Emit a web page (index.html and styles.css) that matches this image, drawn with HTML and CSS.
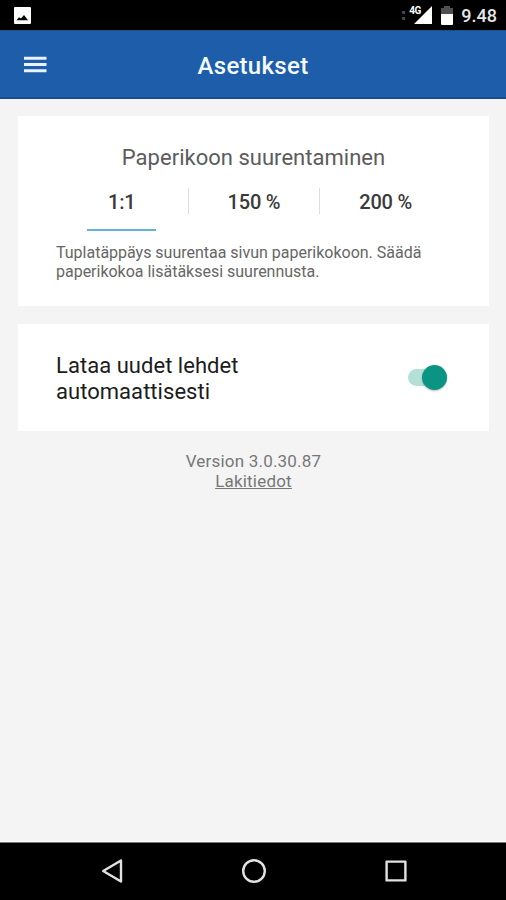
FILE: index.html
```html
<!DOCTYPE html>
<html lang="fi">
<head>
<meta charset="utf-8">
<title>Asetukset</title>
<link rel="stylesheet" href="styles.css">
</head>
<body>
<div class="screen">
  <div class="status">
    <svg class="status-image" width="17" height="17" viewBox="0 0 17 17"><path fill="#fff" d="M1 0h15q1 0 1 1v15q0 1-1 1H1q-1 0-1-1V1q0-1 1-1z"/><path d="M2.5 13.2 5 10.2 7 11.5 10 8 14 13.2z"/></svg>
    <div class="status-right">
      <svg width="4" height="9" viewBox="0 0 4 9" fill="#444"><path d="M0 0h3v3H0zM0 6h3v3H0z"/></svg>
      <div class="signal">
        <svg width="18" height="18" viewBox="0 0 18 18"><path fill="#fff" d="M18 0v18H0z"/></svg>
        <span class="network">4G</span>
      </div>
      <svg class="battery" width="12" height="19" viewBox="0 0 12 19"><path fill="#505050" d="M3 0h6v2h3v6H0V2h3z"/><path fill="#fff" d="M0 8h12v10q0 1-1 1H1q-1 0-1-1z"/></svg>
      <span class="clock">9.48</span>
    </div>
  </div>
  <header class="appbar">
    <svg class="menu" width="23" height="17" viewBox="0 0 23 17" fill="#e8f3fd"><path d="M0 .7h22.5v3H0zM0 7h22.5v3H0zM0 13.2h22.5v3H0z"/></svg>
    <h1><span>Asetukset</span></h1>
  </header>
  <main>
    <section class="card zoom-card">
      <h2><span>Paperikoon suurentaminen</span></h2>
      <div class="tabs">
        <div class="tab selected"><span>1:1</span></div>
        <div class="tab"><span>150 %</span></div>
        <div class="tab"><span>200 %</span></div>
      </div>
      <p class="hint"><span>Tuplatäppäys suurentaa sivun paperikokoon. Säädä</span><br><span>paperikokoa lisätäksesi suurennusta.</span></p>
    </section>
    <section class="card auto-card">
      <p><span>Lataa uudet lehdet</span><br><span>automaattisesti</span></p>
      <div class="switch"><div class="thumb"></div></div>
    </section>
    <footer><div><span>Version 3.0.30.87</span></div><a>Lakitiedot</a></footer>
  </main>
  <nav>
    <svg width="22" height="24" viewBox="0 0 22 24"><path d="M20 1.5v21L2.2 12z"/></svg>
    <svg width="24" height="24" viewBox="0 0 24 24"><circle cx="12" cy="12" r="10.8"/></svg>
    <svg width="22" height="22" viewBox="0 0 22 22"><rect x="1.6" y="1.6" width="18.8" height="18.8"/></svg>
  </nav>
</div>
</body>
</html>
```

FILE: styles.css
```css
* { box-sizing: border-box; margin: 0; padding: 0; }
body { font-family: Roboto, "Liberation Sans", sans-serif; background: #f4f4f4; }
svg { display: block; flex: none; }
.screen { width: 506px; height: 900px; display: flex; flex-direction: column; overflow: hidden; }
.status { height: 30px; background: #000; display: flex; justify-content: space-between; padding: 0 9px 0 14px; }
.status-image { margin-top: 7px; }
.status-right { display: flex; align-items: flex-start; }
.status-right > svg:first-child { margin-top: 11px; }
.signal { position: relative; margin: 6px 0 0 7px; padding-left: 1px; }
.network { position: absolute; left: -4px; top: 0; font-size: 10px; line-height: 10px; font-weight: 700; color: #fff; letter-spacing: -0.5px; }
.battery { margin: 6px 0 0 9px; }
.clock { color: #e6e6e6; font-size: 18px; line-height: 20px; font-weight: 500; margin: 6px 0 0 8px; }
.appbar { height: 69px; background: #1e5da9; border-top: 1px solid #1b4f87; border-bottom: 2px solid #174b93; display: grid; grid-template-columns: 80px 1fr 80px; }
.menu { margin: 25px 0 0 24px; }
h1 { color: #f3faff; font-size: 24px; line-height: 30px; font-weight: 500; text-align: center; margin-top: 20px; letter-spacing: .3px; }
main { flex: 1; padding: 17px 17px 0 18px; display: flex; flex-direction: column; gap: 18px; border-bottom: 1px solid #fff; }
.card { background: #fff; padding: 0 38px; }
.zoom-card { height: 190px; }
h2 { font-size: 22px; line-height: 26px; font-weight: 400; color: #5c5c5c; text-align: center; padding-top: 29px; letter-spacing: .02px; }
.tabs { display: grid; grid-template-columns: repeat(3, 1fr); margin-top: 17px; }
.tab { height: 26px; border-left: 1px solid #ddd; font-size: 20px; line-height: 28px; font-weight: 500; color: #3a3a3a; text-align: center; letter-spacing: -.2px; }
.tab.selected { border-left: 0; height: 43px; width: 69px; justify-self: center; border-bottom: 2px solid #64b2d8; }
.hint { font-size: 16px; line-height: 19px; color: #666; margin-top: 12px; letter-spacing: -.01px; white-space: nowrap; }
.auto-card { height: 107px; display: flex; justify-content: space-between; align-items: center; padding-right: 42px; }
.auto-card p { font-size: 22px; line-height: 26px; color: #1c1c1c; margin-top: 2px; letter-spacing: .04px; }
.switch { width: 39px; height: 17px; border-radius: 9px; background: #b5e0d8; display: flex; justify-content: flex-end; align-items: center; }
.thumb { width: 25px; height: 25px; border-radius: 50%; background: #0a9482; box-shadow: 0 1px 2px #0004; flex: none; }
footer { text-align: center; font-size: 17px; line-height: 20px; color: #777; margin-top: 2px; letter-spacing: .2px; }
footer a { text-decoration: underline; }
nav { height: 58px; background: #000; display: flex; justify-content: space-between; align-items: center; padding: 0 99px 2px 101px; border-top: 1px solid #777; }
nav svg { fill: none; stroke: #e2e2e2; stroke-width: 2.4; stroke-linejoin: round; }
```
